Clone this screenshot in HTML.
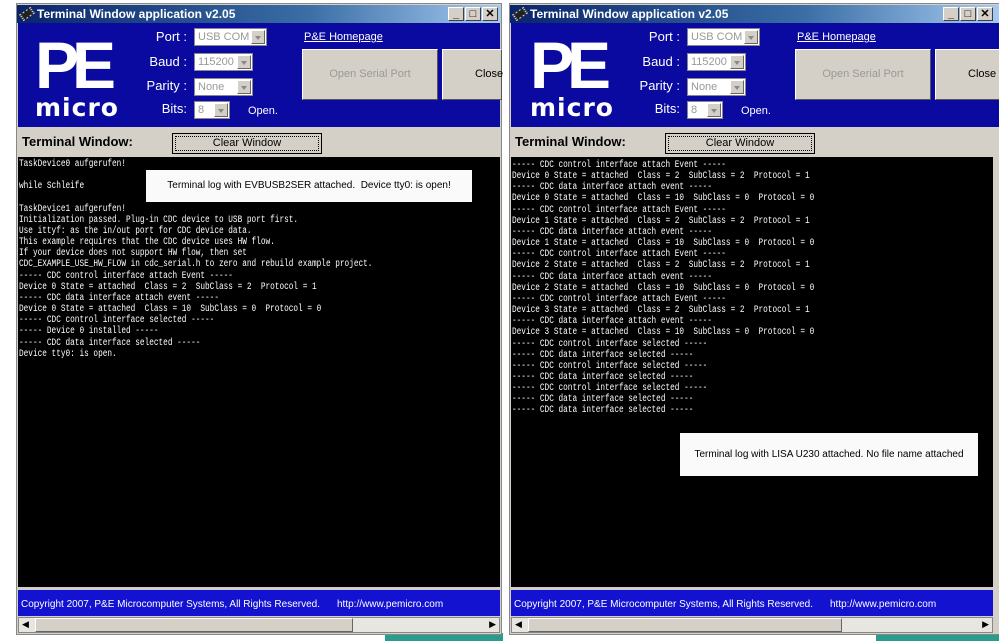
<!DOCTYPE html>
<html><head><meta charset="utf-8"><style>
*{margin:0;padding:0;box-sizing:border-box}
body{width:999px;height:641px;background:#fff;position:relative;overflow:hidden;font-family:"Liberation Sans",sans-serif}
.teal{position:absolute;background:#2a9c8c}
.win{position:absolute;top:0;height:641px;width:486px}
.frame{position:absolute;left:0;top:3px;width:486px;height:632px;background:#d4d0c8;border:1px solid #888}
.tb{position:absolute;left:1px;top:5px;width:484px;height:18px;background:linear-gradient(90deg,#0a246a,#3a6ea5 60%,#a6caf0);color:#fff;font-weight:bold;font-size:12px;line-height:18px;padding-left:20px}
.tb .ic{position:absolute;left:3px;top:2px;width:14px;height:14px;background:#222;transform:rotate(-35deg) scaleY(.55);border:2px dotted #ccc}
.btns{position:absolute;right:3px;top:2px}
.btns span{display:inline-block;width:16px;height:14px;background:#d4d0c8;border:1px solid;border-color:#fff #404040 #404040 #fff;margin-left:1px;color:#000;font-size:11px;line-height:12px;text-align:center;vertical-align:top}
.blue{position:absolute;left:2px;top:23px;width:482px;height:104px;background:#0a0aa0}
.logo{position:absolute;left:17px;top:12px;color:#fff;font-weight:900;width:90px}
.pe{font-size:66px;line-height:60px;letter-spacing:-7px;transform:scaleX(1.0);transform-origin:left;display:block}
.mi{font-size:25px;line-height:26px;letter-spacing:1px;display:block;font-family:"DejaVu Sans",sans-serif;font-weight:bold}
.lab{position:absolute;color:#fff;font-size:13px;text-align:right;width:80px}
.sel{position:absolute;height:18px;background:#fff;border:1px solid #888;color:#999;font-size:11px;line-height:16px;padding-left:3px}
.sel i{position:absolute;right:1px;top:1px;width:14px;height:14px;background:#d4d0c8;border:1px solid #fff;border-right-color:#666;border-bottom-color:#666}
.sel i:after{content:"";position:absolute;left:3px;top:5px;border:3px solid transparent;border-top:4px solid #888}
.pbtn{position:absolute;background:#d4d0c8;border:1px solid;border-color:#fff #555 #555 #fff;font-size:11px;text-align:center}
.gray{position:absolute;left:2px;top:127px;width:482px;height:30px}
.term{position:absolute;left:2px;top:157px;width:482px;height:430px;background:#000;overflow:hidden}
.term pre{font-family:"Liberation Mono",monospace;font-size:10px;line-height:11.15px;color:#fff;transform:scaleX(.775);transform-origin:0 0;position:absolute;left:1px;top:2px;white-space:pre}
.foot{position:absolute;left:2px;top:590px;width:482px;height:26px;background:#1212d0;color:#fff;font-size:10px;line-height:29px;padding-left:3px}
.sb{position:absolute;left:2px;top:617px;width:482px;height:16px;background:#e8e6e0;border:1px solid #888}
.note{position:absolute;background:#fafafa;color:#000;text-align:center}
</style></head><body>
<div class="teal" style="left:385px;top:633px;width:118px;height:8px"></div>
<div class="teal" style="left:876px;top:633px;width:123px;height:8px"></div>

<div class="win" style="left:16px">
<div class="frame"></div>
<div class="tb"><span class="ic"></span>Terminal Window application v2.05<div class="btns"><span>_</span><span>□</span><span>✕</span></div></div>
<div class="blue">
<div class="logo"><span class="pe">PE</span><span class="mi">micro</span></div>
<div class="lab" style="left:89px;top:6px">Port :</div>
<div class="lab" style="left:89px;top:31px">Baud :</div>
<div class="lab" style="left:89px;top:55px">Parity :</div>
<div class="lab" style="left:89px;top:78px">Bits:</div>
<div class="sel" style="left:176px;top:5px;width:73px">USB COM<i></i></div>
<div class="sel" style="left:176px;top:30px;width:59px">115200<i></i></div>
<div class="sel" style="left:176px;top:55px;width:59px">None<i></i></div>
<div class="sel" style="left:176px;top:78px;width:36px">8<i></i></div>
<div style="position:absolute;left:230px;top:82px;color:#fff;font-size:11px">Open.</div>
<div style="position:absolute;left:286px;top:8px;color:#fff;font-size:11px;text-decoration:underline">P&amp;E Homepage</div>
<div class="pbtn" style="left:284px;top:26px;width:136px;height:51px;line-height:49px;color:#999">Open Serial Port</div>
<div class="pbtn" style="left:424px;top:26px;width:60px;height:51px;line-height:49px;text-align:left;padding-left:32px">Close</div>
</div>
<div class="gray">
<div style="position:absolute;left:4px;top:7px;font-size:13px;font-weight:bold">Terminal Window:</div>
<div class="pbtn" style="left:154px;top:6px;width:150px;height:21px;line-height:19px;border:1px solid #000;outline:1px dotted #000;outline-offset:-4px">Clear Window</div>
</div>
<div class="term"><pre>TaskDevice0 aufgerufen!

while Schleife

TaskDevice1 aufgerufen!
Initialization passed. Plug-in CDC device to USB port first.
Use ittyf: as the in/out port for CDC device data.
This example requires that the CDC device uses HW flow.
If your device does not support HW flow, then set
CDC_EXAMPLE_USE_HW_FLOW in cdc_serial.h to zero and rebuild example project.
----- CDC control interface attach Event -----
Device 0 State = attached  Class = 2  SubClass = 2  Protocol = 1
----- CDC data interface attach event -----
Device 0 State = attached  Class = 10  SubClass = 0  Protocol = 0
----- CDC control interface selected -----
----- Device 0 installed -----
----- CDC data interface selected -----
Device tty0: is open.</pre>
<div class="note" style="left:128px;top:13px;width:326px;height:32px;line-height:32px;font-size:10px">Terminal log with EVBUSB2SER attached.&nbsp; Device tty0: is open!</div>
</div>
<div class="foot">Copyright 2007, P&amp;E Microcomputer Systems, All Rights Reserved.<span style="position:absolute;left:319px">http://www.pemicro.com</span></div>
<div class="sb"><div style="position:absolute;left:16px;top:0;width:318px;height:14px;background:#d4d0c8;border:1px solid;border-color:#fff #666 #666 #fff"></div><span style="position:absolute;left:3px;top:1px;font-size:9px">◀</span><span style="position:absolute;right:3px;top:1px;font-size:9px">▶</span></div>
</div>

<div class="win" style="left:509px;width:490px">
<div class="frame" style="width:492px"></div>
<div class="tb" style="width:489px"><span class="ic"></span>Terminal Window application v2.05<div class="btns" style="right:6px"><span>_</span><span>□</span><span>✕</span></div></div>
<div class="blue" style="width:490px">
<div class="logo" style="left:19px"><span class="pe">PE</span><span class="mi">micro</span></div>
<div class="lab" style="left:89px;top:6px">Port :</div>
<div class="lab" style="left:89px;top:31px">Baud :</div>
<div class="lab" style="left:89px;top:55px">Parity :</div>
<div class="lab" style="left:89px;top:78px">Bits:</div>
<div class="sel" style="left:176px;top:5px;width:73px">USB COM<i></i></div>
<div class="sel" style="left:176px;top:30px;width:59px">115200<i></i></div>
<div class="sel" style="left:176px;top:55px;width:59px">None<i></i></div>
<div class="sel" style="left:176px;top:78px;width:36px">8<i></i></div>
<div style="position:absolute;left:230px;top:82px;color:#fff;font-size:11px">Open.</div>
<div style="position:absolute;left:286px;top:8px;color:#fff;font-size:11px;text-decoration:underline">P&amp;E Homepage</div>
<div class="pbtn" style="left:284px;top:26px;width:136px;height:51px;line-height:49px;color:#999">Open Serial Port</div>
<div class="pbtn" style="left:424px;top:26px;width:70px;height:51px;line-height:49px;text-align:left;padding-left:32px">Close</div>
</div>
<div class="gray">
<div style="position:absolute;left:4px;top:7px;font-size:13px;font-weight:bold">Terminal Window:</div>
<div class="pbtn" style="left:154px;top:6px;width:150px;height:21px;line-height:19px;border:1px solid #000;outline:1px dotted #000;outline-offset:-4px">Clear Window</div>
</div>
<div class="term"><pre style="top:3px">----- CDC control interface attach Event -----
Device 0 State = attached  Class = 2  SubClass = 2  Protocol = 1
----- CDC data interface attach event -----
Device 0 State = attached  Class = 10  SubClass = 0  Protocol = 0
----- CDC control interface attach Event -----
Device 1 State = attached  Class = 2  SubClass = 2  Protocol = 1
----- CDC data interface attach event -----
Device 1 State = attached  Class = 10  SubClass = 0  Protocol = 0
----- CDC control interface attach Event -----
Device 2 State = attached  Class = 2  SubClass = 2  Protocol = 1
----- CDC data interface attach event -----
Device 2 State = attached  Class = 10  SubClass = 0  Protocol = 0
----- CDC control interface attach Event -----
Device 3 State = attached  Class = 2  SubClass = 2  Protocol = 1
----- CDC data interface attach event -----
Device 3 State = attached  Class = 10  SubClass = 0  Protocol = 0
----- CDC control interface selected -----
----- CDC data interface selected -----
----- CDC control interface selected -----
----- CDC data interface selected -----
----- CDC control interface selected -----
----- CDC data interface selected -----
----- CDC data interface selected -----</pre>
<div class="note" style="left:169px;top:276px;width:298px;height:43px;line-height:43px;font-size:10px">Terminal log with LISA U230 attached. No file name attached</div>
</div>
<div class="foot">Copyright 2007, P&amp;E Microcomputer Systems, All Rights Reserved.<span style="position:absolute;left:319px">http://www.pemicro.com</span></div>
<div class="sb"><div style="position:absolute;left:16px;top:0;width:314px;height:14px;background:#d4d0c8;border:1px solid;border-color:#fff #666 #666 #fff"></div><span style="position:absolute;left:3px;top:1px;font-size:9px">◀</span><span style="position:absolute;right:3px;top:1px;font-size:9px">▶</span></div>
</div>
</body></html>
